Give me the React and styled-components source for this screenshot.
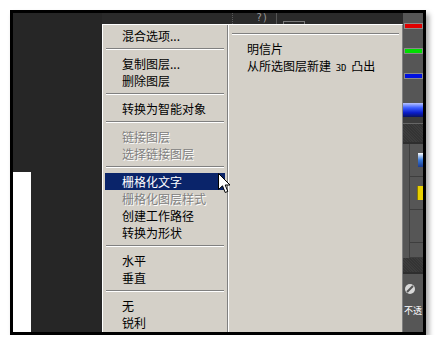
import React from "react";
import styled, { createGlobalStyle } from "styled-components";

const GlobalStyle = createGlobalStyle`
  body {
    margin: 0;
    background: #ffffff;
    font-family: "Noto Sans CJK SC", "Liberation Sans", sans-serif;
  }
`;

const leftItems = [
  { label: "混合选项..." },
  { sep: true },
  { label: "复制图层..." },
  { label: "删除图层" },
  { sep: true },
  { label: "转换为智能对象" },
  { sep: true },
  { label: "链接图层", disabled: true },
  { label: "选择链接图层", disabled: true },
  { sep: true },
  { label: "栅格化文字", active: true },
  { label: "栅格化图层样式", disabled: true },
  { label: "创建工作路径" },
  { label: "转换为形状" },
  { sep: true },
  { label: "水平" },
  { label: "垂直" },
  { sep: true },
  { label: "无" },
  { label: "锐利" },
];

const App = () => {
  return (
    <>
      <GlobalStyle />
      <Frame>
        <LeftDark>
          <WhiteBlock />
        </LeftDark>
        <Middle>
          <TopStrip>
            <DottedLine />
            <HelpGlyph>?)</HelpGlyph>
            <SolidLine />
            <SmallBox />
          </TopStrip>
          <Menu>
            <LeftCol>
              {leftItems.map((item, i) =>
                item.sep ? (
                  <Separator key={i} />
                ) : (
                  <Item key={i} $disabled={item.disabled} $active={item.active}>
                    {item.label}
                  </Item>
                )
              )}
            </LeftCol>
            <RightCol>
              <Separator />
              <SubItem>明信片</SubItem>
              <SubItem>
                从所选图层新建 <Small>3D</Small> 凸出
              </SubItem>
            </RightCol>
          </Menu>
        </Middle>
        <RightPanel>
          <ColorBar $color="#e00000" />
          <ColorBar $color="#00dd00" />
          <ColorBar $color="#0010e0" />
          <Thumb />
          <DarkStrip />
          <Textured />
          <GridCell>
            <BlueIcon />
          </GridCell>
          <GridCell>
            <YellowIcon />
          </GridCell>
          <GridCell />
          <GridCell $short />
          <Textured $small />
          <KnobRow>
            <svg width="12" height="12" viewBox="0 0 12 12">
              <circle cx="6" cy="6" r="5" fill="#d8d8d8" />
              <path d="M3 9 L9 3" stroke="#555" strokeWidth="2" />
            </svg>
          </KnobRow>
          <PanelText>不透</PanelText>
        </RightPanel>
        <Cursor width="13" height="21" viewBox="0 0 13 21">
          <path
            d="M0.5 0.5 L0.5 16.5 L4.5 12.8 L7.2 19.5 L9.8 18.4 L7.2 12 L12 12 Z"
            fill="#fff"
            stroke="#000"
            strokeWidth="1"
          />
        </Cursor>
      </Frame>
    </>
  );
};

export default App;

const Frame = styled.div`
  position: relative;
  margin: 10px 0 0 10px;
  width: 416px;
  height: 325px;
  box-sizing: border-box;
  border: 3px solid #000;
  display: flex;
  background: #262626;
  box-shadow: 3px 4px 5px rgba(0, 0, 0, 0.35);
`;

const LeftDark = styled.div`
  width: 89px;
  display: flex;
  flex-direction: column;
  justify-content: flex-end;
  background: #262626;
`;

const WhiteBlock = styled.div`
  width: 18px;
  height: 160px;
  background: #ffffff;
`;

const Middle = styled.div`
  width: 301px;
  display: flex;
  flex-direction: column;
`;

const TopStrip = styled.div`
  height: 11px;
  display: flex;
  align-items: flex-start;
  background: #2a2a2a;
`;

const DottedLine = styled.div`
  margin-left: 130px;
  width: 1px;
  height: 11px;
  border-left: 1px dotted #5a5a5a;
`;

const HelpGlyph = styled.div`
  margin-left: 22px;
  font-family: "DejaVu Sans Mono", monospace;
  font-size: 10px;
  line-height: 10px;
  color: #9a9a9a;
`;

const SolidLine = styled.div`
  margin-left: 8px;
  width: 1px;
  height: 11px;
  background: #555;
`;

const SmallBox = styled.div`
  margin: 8px 0 0 6px;
  width: 20px;
  height: 3px;
  border: 1px solid #7a7a7a;
  border-bottom: none;
`;

const Menu = styled.div`
  flex: 1;
  display: flex;
  background: #d4d0c8;
  border-top: 1px solid #ffffff;
  border-left: 1px solid #ffffff;
  border-right: 1px solid #808080;
  font-size: 12px;
  color: #000;
`;

const LeftCol = styled.div`
  width: 125px;
  padding: 2px 2px 0;
  box-sizing: border-box;
  border-right: 1px solid #808080;
`;

const RightCol = styled.div`
  flex: 1;
  padding: 4px 2px 0;
  border-left: 1px solid #ffffff;
`;

const Separator = styled.div`
  margin: 4px 1px 5px;
  height: 0;
  border-top: 1px solid #808080;
  border-bottom: 1px solid #ffffff;
`;

const Item = styled.div`
  height: 17px;
  line-height: 17px;
  padding-left: 17px;
  white-space: nowrap;
  background: ${(p) => (p.$active ? "#0a246a" : "transparent")};
  color: ${(p) => (p.$active ? "#ffffff" : p.$disabled ? "#808080" : "#000")};
  text-shadow: ${(p) => (p.$disabled ? "1px 1px 0 #ffffff" : "none")};
`;

const SubItem = styled.div`
  height: 17px;
  line-height: 17px;
  padding-left: 16px;
  white-space: nowrap;
`;

const Small = styled.span`
  font-family: "DejaVu Sans Mono", monospace;
  font-size: 9px;
  margin: 0 2px;
`;

const RightPanel = styled.div`
  flex: 1;
  display: flex;
  flex-direction: column;
  background: #565656;
  padding-top: 10px;
  overflow: hidden;
`;

const ColorBar = styled.div`
  margin: 0 0 19px 1px;
  height: 4px;
  background: ${(p) => p.$color};
  border: 1px solid #8a8a8a;
`;

const Thumb = styled.div`
  margin-top: 5px;
  height: 14px;
  background: linear-gradient(180deg, #b8c4ff 0%, #3a5cff 35%, #0a1cc8 70%, #0a1460 100%);
`;

const DarkStrip = styled.div`
  height: 6px;
  background: #3c3c3c;
  border-bottom: 1px solid #666;
`;

const Textured = styled.div`
  height: ${(p) => (p.$small ? "14px" : "18px")};
  background: repeating-linear-gradient(45deg, #343434 0 1px, #3c3c3c 1px 2px);
  border-bottom: 2px solid #2e2e2e;
`;

const GridCell = styled.div`
  height: ${(p) => (p.$short ? "14px" : "32px")};
  display: flex;
  align-items: center;
  justify-content: flex-end;
  border-left: 1px solid #3e3e3e;
  border-bottom: 1px solid #3e3e3e;
  margin-left: 6px;
`;

const BlueIcon = styled.div`
  width: 5px;
  height: 14px;
  background: linear-gradient(180deg, #ffffff 0%, #3a7ad8 50%, #1c3c90 100%);
`;

const YellowIcon = styled.div`
  width: 5px;
  height: 14px;
  background: #e8d000;
  border-left: 1px solid #8a7a00;
`;

const KnobRow = styled.div`
  height: 30px;
  display: flex;
  align-items: center;
  padding-left: 1px;
`;

const PanelText = styled.div`
  font-size: 9px;
  color: #ffffff;
  line-height: 14px;
  white-space: nowrap;
  padding-left: 1px;
`;

const Cursor = styled.svg`
  position: absolute;
  left: 205px;
  top: 160px;
`;
